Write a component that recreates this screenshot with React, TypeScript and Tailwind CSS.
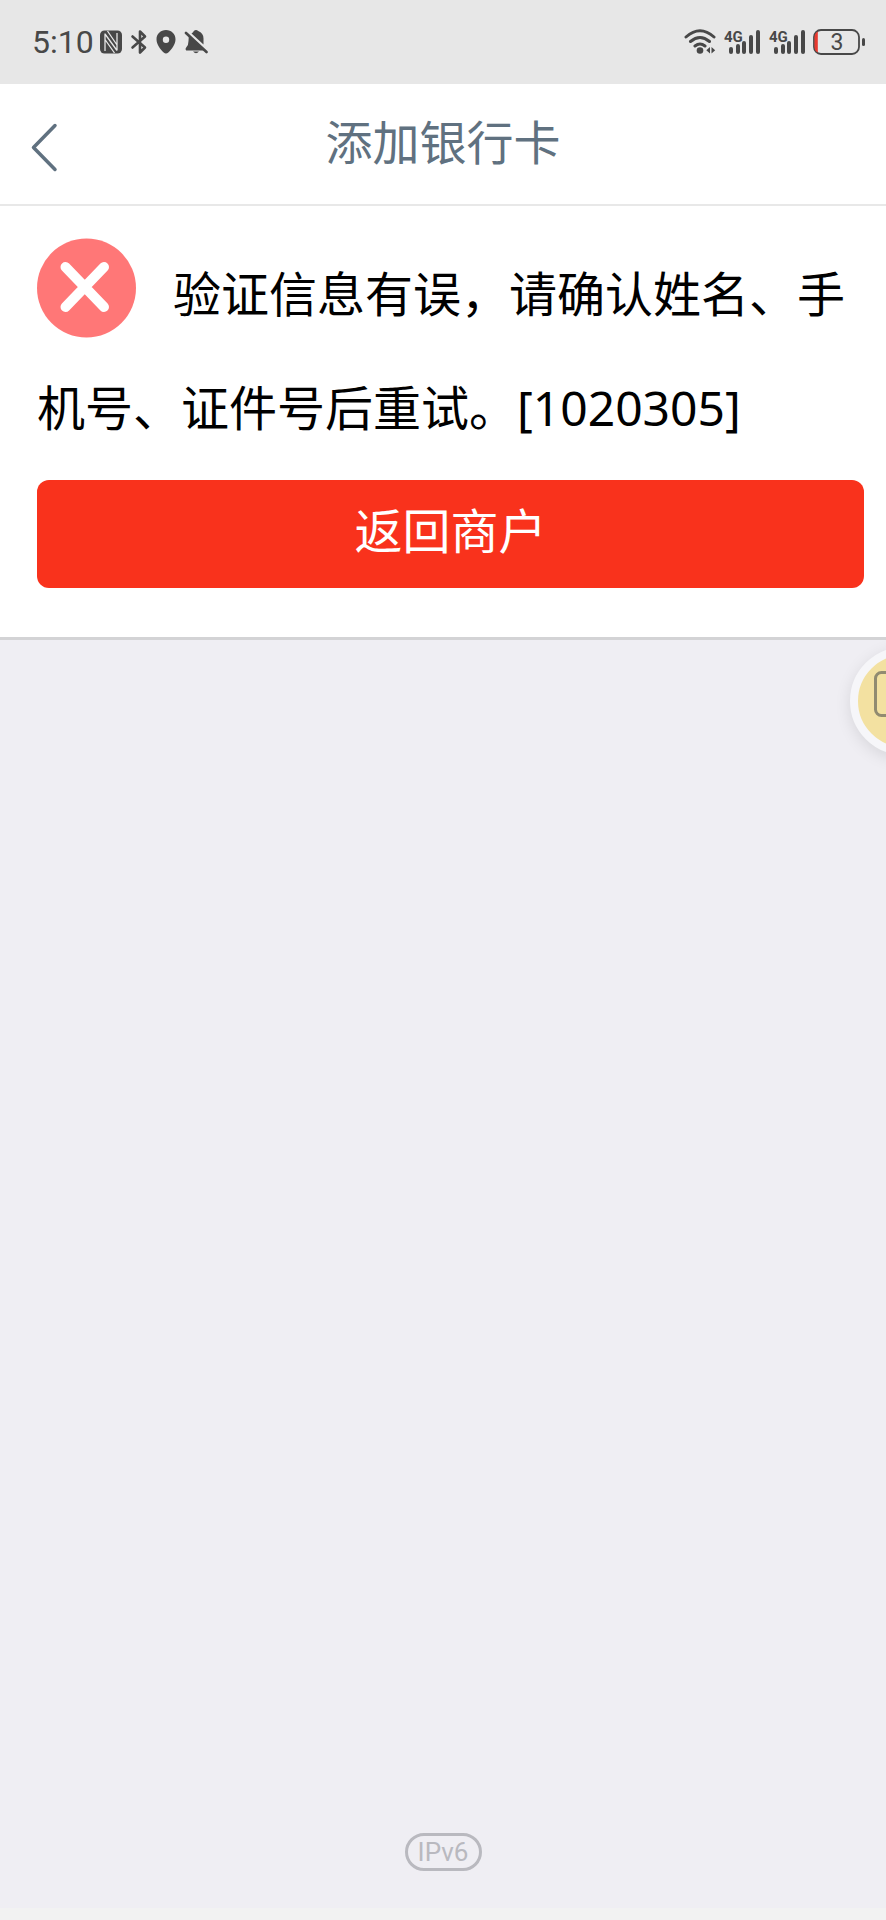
import React from "react";

const SignalIcon = () => {
  return (
    <svg width="38" height="28" viewBox="0 0 38 28" fill="#484848">
      <text
        x="1"
        y="14"
        fontSize="15"
        fontWeight="700"
        className="font-['Roboto',sans-serif]"
      >
        4G
      </text>
      <rect x="6" y="19" width="4" height="7" rx="2" />
      <rect x="13" y="16" width="4" height="10" rx="2" />
      <rect x="19" y="13" width="4" height="13" rx="2" />
      <rect x="26" y="7" width="4" height="19" rx="2" />
      <rect x="33" y="2" width="4" height="24" rx="2" />
    </svg>
  );
};

const StatusBar = () => {
  return (
    <div className="flex h-[84px] items-center justify-between bg-[#e7e7e7] pr-5 pl-8 font-['Roboto',sans-serif] text-[#484848]">
      <div className="flex items-center">
        <span className="text-[32px] leading-10">5:10</span>
        {/* nfc */}
        <svg className="ml-1.5" width="22" height="24" viewBox="0 0 22 24">
          <rect width="22" height="23" y="0.500" rx="4.500" fill="#484848" />
          <path
            d="M5 3.500V21M5 4l12 16.500M17 3v17.500M7.500 1l9.500 14M5 9.500 14.500 23"
            stroke="#e7e7e7"
            strokeWidth="1.300"
            fill="none"
          />
        </svg>
        {/* bluetooth */}
        <svg
          className="ml-2"
          width="18"
          height="26"
          viewBox="0 0 18 26"
          fill="none"
          stroke="#484848"
          strokeWidth="2.600"
          strokeLinejoin="round"
          strokeLinecap="round"
        >
          <path d="M2.500 7.500 15 18.500l-5 5V2.500l5 5L2.500 18.500" />
        </svg>
        {/* location */}
        <svg className="ml-2" width="20" height="26" viewBox="0 0 20 26">
          <path
            d="M10 1C4.600 1 .5 5 .5 10.200c0 5.200 3.700 9.800 7.200 13.300q2.300 2.200 4.600 0c3.500-3.500 7.200-8.100 7.200-13.300C19.500 5 15.400 1 10 1zm0 6.500a3.200 3.200 0 1 1 0 6.400 3.200 3.200 0 0 1 0-6.400z"
            fill="#484848"
            fillRule="evenodd"
          />
        </svg>
        {/* muted bell */}
        <svg className="ml-2" width="24" height="26" viewBox="0 0 24 26">
          <path
            d="M7.500 4.500Q9.500 3 9.800 2q2.200-2 4.400 0 5.300 2 5.300 7.500v6z"
            fill="#484848"
          />
          <path
            d="M4.800 7.500 18.500 19.500 20 21.500H2.200q-1.500-1.500 0-3Q4.500 16.500 4.500 12z"
            fill="#484848"
          />
          <path d="M9 22.500h6q-3 3.500-6 0z" fill="#484848" />
          <path
            d="M2 4l20.500 19"
            stroke="#484848"
            strokeWidth="2.600"
            strokeLinecap="round"
          />
        </svg>
      </div>
      <div className="flex items-center gap-[7px]">
        {/* wifi */}
        <svg
          width="32"
          height="26"
          viewBox="0 0 32 26"
          fill="none"
          stroke="#484848"
          strokeWidth="3"
          strokeLinecap="round"
        >
          <path d="M2 8Q16-4.500 30 8M6.500 12.500q9.500-8 19 0M11 17q5-4 10 0" />
          <circle cx="16" cy="21.500" r="3.300" fill="#484848" stroke="none" />
          <path
            d="M26 18v6.500l-3.700-3.200zM27.500 18v6.500l3.700-3.200z"
            fill="#484848"
            stroke="none"
          />
        </svg>
        <SignalIcon />
        <SignalIcon />
        {/* battery */}
        <svg width="53" height="28" viewBox="0 0 53 28">
          <rect
            x="1"
            y="2"
            width="45"
            height="24"
            rx="7"
            fill="none"
            stroke="#484848"
            strokeWidth="1.800"
          />
          <path d="M4.800 3.500v21Q1.500 23 1.500 19V9q0-4 3.300-5.500z" fill="#e8392f" />
          <rect x="49" y="10" width="3" height="8" rx="1.500" fill="#484848" />
          <text
            x="24"
            y="22"
            fontSize="23"
            textAnchor="middle"
            fill="#484848"
            className="font-['Roboto',sans-serif]"
          >
            3
          </text>
        </svg>
      </div>
    </div>
  );
};

const Header = () => {
  return (
    <header className="grid h-[122px] grid-cols-[88px_1fr_88px] items-center border-b-2 border-[#e8e8e8] bg-white text-[#607180]">
      <button type="button" aria-label="返回" className="pt-1.5 pl-[30px]">
        <svg
          width="30"
          height="50"
          viewBox="0 0 30 50"
          fill="none"
          stroke="currentColor"
          strokeWidth="3.500"
          strokeLinecap="round"
          strokeLinejoin="round"
        >
          <path d="M25 3.500 3.500 25.500 25 47.500" />
        </svg>
      </button>
      <h1 className="pb-1 text-center text-[47px] leading-[64px]">
        添加银行卡
      </h1>
    </header>
  );
};

const ErrorIcon = () => {
  return (
    <svg
      className="mt-px mr-9 inline-block align-top"
      width="100"
      height="100"
      viewBox="0 0 100 100"
    >
      <circle cx="49.500" cy="50" r="49.500" fill="#ff7777" />
      <path
        d="M28.500 29l38.500 40M67 29l-38.500 40"
        stroke="#fff"
        strokeWidth="10"
        strokeLinecap="round"
      />
    </svg>
  );
};

const App = () => {
  return (
    <div
      lang="zh-CN"
      className="flex min-h-screen flex-col bg-[#efeef3] font-['Noto_Sans','Noto_Sans_CJK_SC',sans-serif]"
    >
      <StatusBar />
      <Header />
      <section className="border-b-[3px] border-[#d3d3d5] bg-white pt-[31px] pr-[22px] pb-[49px] pl-[37px]">
        <p className="text-[48px] leading-[114px] text-black">
          <ErrorIcon />
          验证信息有误，请确认姓名、手机号、证件号后重试。[1020305]
        </p>
        <button
          type="button"
          className="mt-[15px] flex h-[108px] w-full items-center justify-center rounded-xl bg-[#f9321c] pb-1.5 text-[48px] leading-[64px] text-white"
        >
          返回商户
        </button>
      </section>
      <main className="relative flex flex-1 flex-col justify-end overflow-hidden">
        {/* floating bubble, half off the right edge */}
        <button
          type="button"
          aria-label="悬浮窗"
          className="absolute top-[7px] -right-[72px] size-[108px] rounded-full border-8 border-[#f6f6f9] bg-[#f3e1a1] shadow-[0_4px_16px_rgba(0,0,0,0.1)]"
        >
          <svg
            width="60"
            height="92"
            viewBox="0 0 60 92"
            fill="none"
            stroke="#918b70"
            strokeWidth="3"
            className="ml-4"
          >
            <rect x="1.500" y="17.500" width="34" height="43" rx="6" />
          </svg>
        </button>
        <div className="flex justify-center pb-[37px]">
          <span className="flex h-[38px] w-[77px] items-center justify-center rounded-full border-[3px] border-[#b9b9bf] font-['Roboto',sans-serif] text-[26px] leading-8 text-[#b9b9bf]">
            IPv6
          </span>
        </div>
      </main>
      <div className="h-3 bg-[#f2f2f2]" />
    </div>
  );
};

export default App;
